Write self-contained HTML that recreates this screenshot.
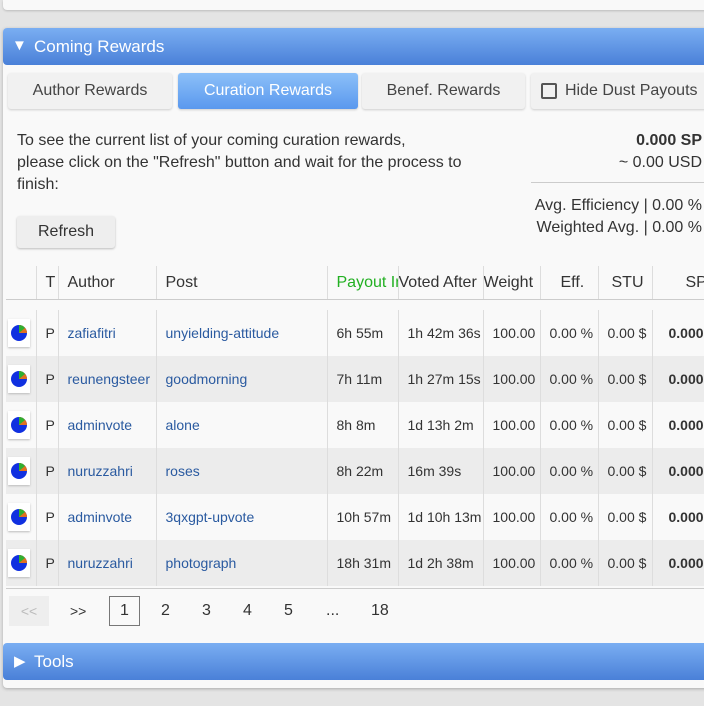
<!DOCTYPE html>
<html><head><meta charset="utf-8"><style>
*{box-sizing:border-box;margin:0;padding:0}
body{width:704px;height:706px;overflow:hidden;background:#e4e4e4;font-family:"Liberation Sans",sans-serif;color:#333;position:relative}
.a{position:absolute;white-space:nowrap}
.card{position:absolute;left:3px;top:0;width:720px;height:10px;background:#f9f9f9;border-radius:0 0 4px 4px;box-shadow:0 1px 2px #bbb}
.main{position:absolute;left:3px;top:28px;width:720px;height:660px;background:#f9f9f9;border-radius:4px;box-shadow:0 1px 3px #aaa}
.bar{position:absolute;left:3px;width:720px;height:37px;background:linear-gradient(#7aaef2,#4a80d8);border-radius:4px;color:#fff;font-size:17px}
.tab{position:absolute;top:73px;height:36px;background:#f1f1f1;border-radius:3px;box-shadow:0 1px 2px #ccc;font-size:16px;color:#444;line-height:36px;text-align:center}
.t16{font-size:16px}
table{position:absolute;left:6px;top:266px;border-collapse:collapse;font-size:14px;table-layout:fixed;width:706px}
td,th{height:46px;white-space:nowrap;overflow:hidden;border-right:1px solid #ddd;padding:0 0 0 9px;text-align:left;font-weight:normal}
th{height:33px;font-size:16px;color:#333;border-bottom:1px solid #ccc;padding-left:9px;padding-top:2px}
tr.sp td{height:11px;border:none}
tr.g td{background:#ececec}
tr.w td{background:#f9f9f9}
.l{color:#2a5aa0}
.pie{width:22px;height:28px;background:#fff;box-shadow:0 1px 2px #bbb;display:flex;align-items:center;justify-content:center;margin-left:-7px}
</style></head><body>
<div class="card"></div>
<div class="main"></div>
<div class="bar" style="top:28px"><span class="a" style="left:9px;top:9px;font-size:15px">&#9660;</span><span class="a" style="left:31px;top:9px">Coming Rewards</span></div>
<div class="tab" style="left:8px;width:164px">Author Rewards</div>
<div class="tab" style="left:178px;width:180px;background:linear-gradient(#8cc0f8,#5a98ee);color:#fff">Curation Rewards</div>
<div class="tab" style="left:362px;width:163px">Benef. Rewards</div>
<div class="tab" style="left:531px;width:190px;text-align:left;padding-left:34px">Hide Dust Payouts<span class="a" style="left:10px;top:10px;width:16px;height:16px;border:2px solid #555;border-radius:2px"></span></div>
<div class="a t16" style="left:17px;top:130px;line-height:22px;color:#333">To see the current list of your coming curation rewards,<br>please click on the "Refresh" button and wait for the process to<br>finish:</div>
<div class="a t16" style="right:2px;top:130px;text-align:right;line-height:22px"><b style="font-weight:bold">0.000 SP</b><br>~ 0.00 USD</div>
<div class="a" style="left:531px;top:182px;width:180px;border-top:1px solid #ccc"></div>
<div class="a t16" style="right:2px;top:195px;line-height:22px;text-align:right">Avg. Efficiency | 0.00 %<br>Weighted Avg. | 0.00 %</div>
<div class="a t16" style="left:17px;top:216px;width:98px;height:32px;background:#eee;box-shadow:0 1px 2px #bbb;border-radius:3px;line-height:32px;text-align:center">Refresh</div>
<table>
<colgroup><col style="width:30px"><col style="width:22px"><col style="width:98px"><col style="width:171px"><col style="width:71px"><col style="width:85px"><col style="width:57px"><col style="width:58px"><col style="width:54px"><col style="width:60px"></colgroup>
<tr><th></th><th>T</th><th>Author</th><th>Post</th><th style="color:#22b022">Payout In</th><th style="padding-left:0">Voted After</th><th style="padding-left:0">Weight</th><th style="padding-left:20px">Eff.</th><th style="padding-left:13px">STU</th><th style="padding-left:33px;border:none;border-bottom:1px solid #ccc">SP</th></tr>
<tr class="sp"><td colspan="10"></td></tr>
<tr class="w"><td><div class="pie"><svg width="18" height="18" viewBox="0 0 18 18"><circle cx="9" cy="9" r="8" fill="#1030e0"/><path d="M9 9 L9 1 A8 8 0 0 1 17 9 Z" fill="#e07020"/><path d="M9 9 L9 1 A8 8 0 0 1 15 4 Z" fill="#30b030"/></svg></div></td><td>P</td><td class="l">zafiafitri</td><td class="l">unyielding-attitude</td><td>6h 55m</td><td>1h 42m 36s</td><td>100.00</td><td>0.00 %</td><td>0.00 $</td><td style="font-weight:bold;border:none;padding-left:16px">0.000</td></tr>
<tr class="g"><td><div class="pie"><svg width="18" height="18" viewBox="0 0 18 18"><circle cx="9" cy="9" r="8" fill="#1030e0"/><path d="M9 9 L9 1 A8 8 0 0 1 17 9 Z" fill="#e07020"/><path d="M9 9 L9 1 A8 8 0 0 1 15 4 Z" fill="#30b030"/></svg></div></td><td>P</td><td class="l">reunengsteer</td><td class="l">goodmorning</td><td>7h 11m</td><td>1h 27m 15s</td><td>100.00</td><td>0.00 %</td><td>0.00 $</td><td style="font-weight:bold;border:none;padding-left:16px">0.000</td></tr>
<tr class="w"><td><div class="pie"><svg width="18" height="18" viewBox="0 0 18 18"><circle cx="9" cy="9" r="8" fill="#1030e0"/><path d="M9 9 L9 1 A8 8 0 0 1 17 9 Z" fill="#e07020"/><path d="M9 9 L9 1 A8 8 0 0 1 15 4 Z" fill="#30b030"/></svg></div></td><td>P</td><td class="l">adminvote</td><td class="l">alone</td><td>8h 8m</td><td>1d 13h 2m</td><td>100.00</td><td>0.00 %</td><td>0.00 $</td><td style="font-weight:bold;border:none;padding-left:16px">0.000</td></tr>
<tr class="g"><td><div class="pie"><svg width="18" height="18" viewBox="0 0 18 18"><circle cx="9" cy="9" r="8" fill="#1030e0"/><path d="M9 9 L9 1 A8 8 0 0 1 17 9 Z" fill="#e07020"/><path d="M9 9 L9 1 A8 8 0 0 1 15 4 Z" fill="#30b030"/></svg></div></td><td>P</td><td class="l">nuruzzahri</td><td class="l">roses</td><td>8h 22m</td><td>16m 39s</td><td>100.00</td><td>0.00 %</td><td>0.00 $</td><td style="font-weight:bold;border:none;padding-left:16px">0.000</td></tr>
<tr class="w"><td><div class="pie"><svg width="18" height="18" viewBox="0 0 18 18"><circle cx="9" cy="9" r="8" fill="#1030e0"/><path d="M9 9 L9 1 A8 8 0 0 1 17 9 Z" fill="#e07020"/><path d="M9 9 L9 1 A8 8 0 0 1 15 4 Z" fill="#30b030"/></svg></div></td><td>P</td><td class="l">adminvote</td><td class="l">3qxgpt-upvote</td><td>10h 57m</td><td>1d 10h 13m</td><td>100.00</td><td>0.00 %</td><td>0.00 $</td><td style="font-weight:bold;border:none;padding-left:16px">0.000</td></tr>
<tr class="g"><td><div class="pie"><svg width="18" height="18" viewBox="0 0 18 18"><circle cx="9" cy="9" r="8" fill="#1030e0"/><path d="M9 9 L9 1 A8 8 0 0 1 17 9 Z" fill="#e07020"/><path d="M9 9 L9 1 A8 8 0 0 1 15 4 Z" fill="#30b030"/></svg></div></td><td>P</td><td class="l">nuruzzahri</td><td class="l">photograph</td><td>18h 31m</td><td>1d 2h 38m</td><td>100.00</td><td>0.00 %</td><td>0.00 $</td><td style="font-weight:bold;border:none;padding-left:16px">0.000</td></tr>
</table>
<div class="a" style="left:6px;top:588px;width:700px;border-top:1px solid #ccc"></div>
<div class="a" style="left:9px;top:596px;width:40px;height:30px;background:#eee;color:#bbb;font-size:14px;line-height:30px;text-align:center">&lt;&lt;</div>
<div class="a" style="left:70px;top:603px;font-size:14px">&gt;&gt;</div>
<div class="a t16" style="left:109px;top:596px;width:31px;height:30px;border:1px solid #777;text-align:center;line-height:28px">1</div>
<div class="a t16" style="left:161px;top:602px">2</div>
<div class="a t16" style="left:202px;top:602px">3</div>
<div class="a t16" style="left:243px;top:602px">4</div>
<div class="a t16" style="left:284px;top:602px">5</div>
<div class="a t16" style="left:326px;top:602px">...</div>
<div class="a t16" style="left:371px;top:602px">18</div>
<div class="bar" style="top:643px"><span class="a" style="left:11px;top:9px;font-size:15px">&#9654;</span><span class="a" style="left:31px;top:9px">Tools</span></div>
</body></html>
